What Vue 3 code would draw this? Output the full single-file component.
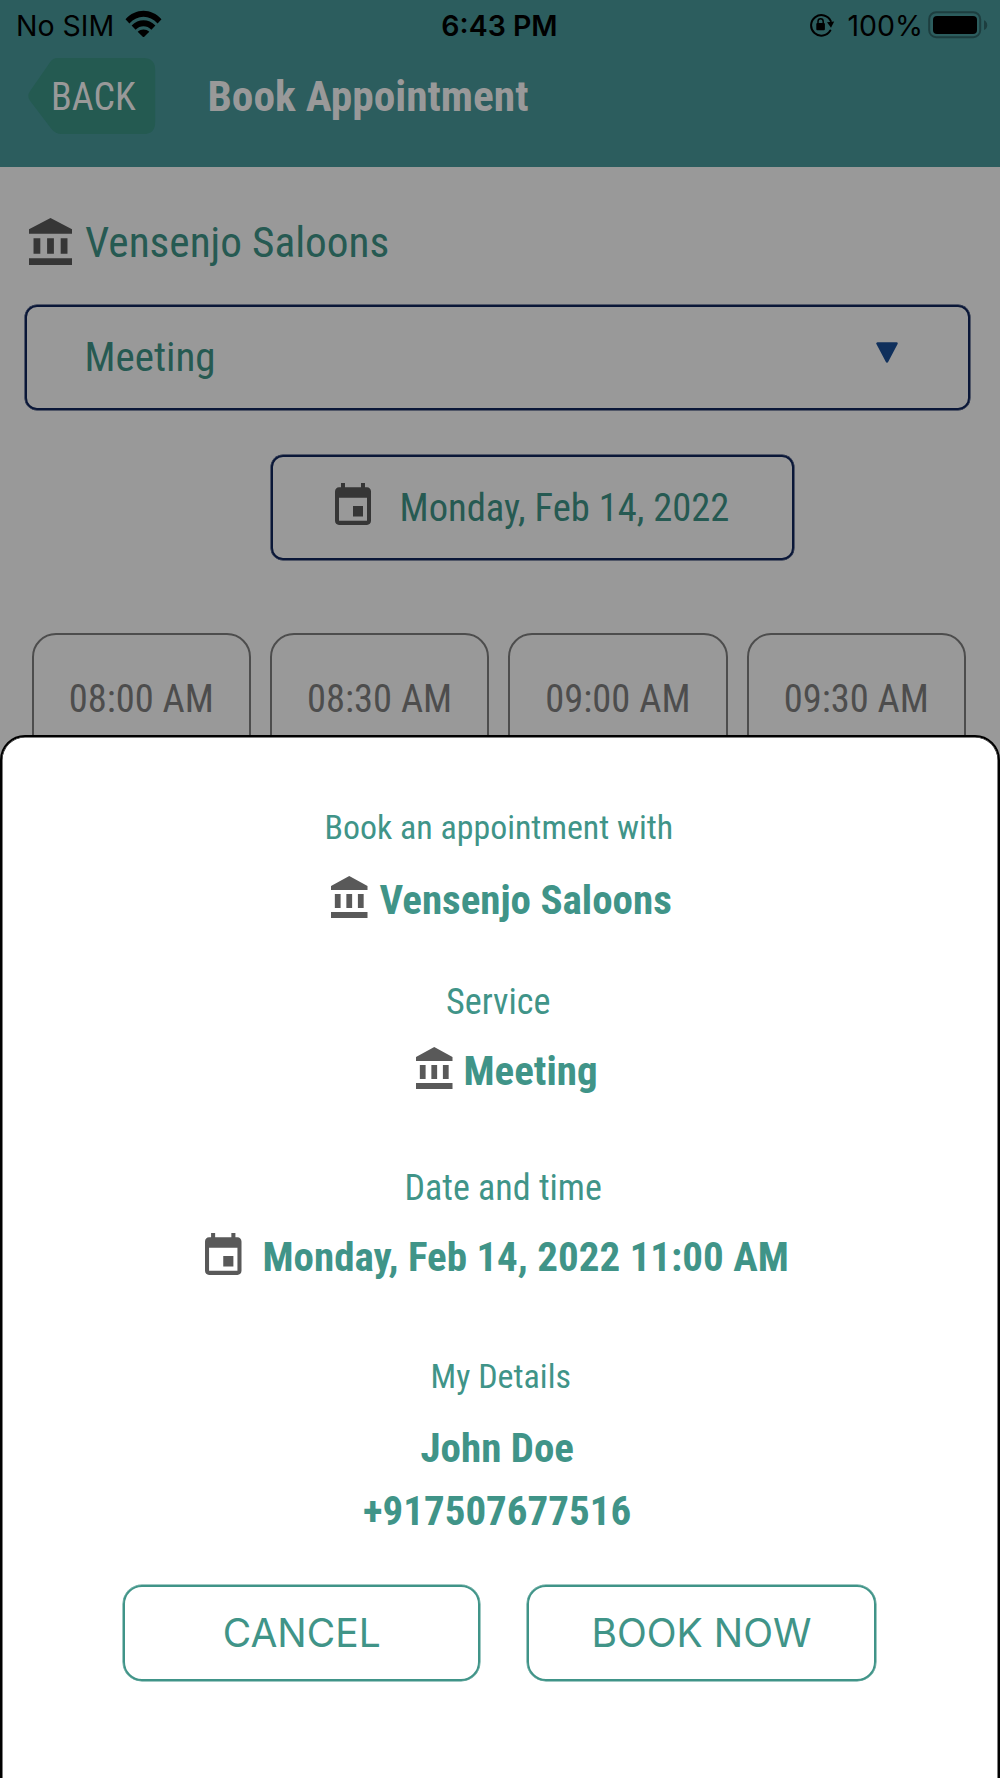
<template>
  <div class="screen">
    <header class="header">
      <div class="status-bar">
        <div class="status-left">
          <span class="carrier">No SIM</span>
          <svg class="wifi" viewBox="0 0 37 27">
            <path d="M0.5 9.3C10.5-2.2 26.5-2.2 36.5 9.3L32.6 13.4C24.6 4.6 12.4 4.6 4.4 13.4Z" />
            <path d="M6.6 15.6C13.4 8.4 23.6 8.4 30.4 15.6L26.4 19.7C21.8 15.2 15.2 15.2 10.6 19.7Z" />
            <path d="M12.7 21.8C16 18.7 21 18.7 24.3 21.8L18.5 27.5Z" />
          </svg>
        </div>
        <span class="clock">6:43 PM</span>
        <div class="status-right">
          <svg class="rotation" viewBox="0 0 26 24">
            <path d="M21.3 17.6A10.3 10.3 0 1 1 21.8 8.2" fill="none" stroke="#000" stroke-width="2" stroke-linecap="round" />
            <path d="M18 9.3L25.2 8.6L22 14.8Z" />
            <rect x="7.3" y="10" width="8.6" height="7.3" rx="1" />
            <path d="M9 10.5V8.4a2.6 2.6 0 0 1 5.2 0v2.1" fill="none" stroke="#000" stroke-width="1.5" />
          </svg>
          <span class="percent">100%</span>
          <svg class="battery" viewBox="0 0 60 28">
            <rect x="1.2" y="1.2" width="51" height="25" rx="7" fill="none" stroke="#1d3e3f" stroke-width="2" />
            <rect x="5" y="5" width="44" height="18" rx="4" />
            <path d="M56 9.3q3.2 1.4 3.2 4.9t-3.2 4.9z" fill="#1d3e3f" />
          </svg>
        </div>
      </div>
      <div class="nav">
        <button type="button" class="back">
          <svg class="back-shape" viewBox="0 0 129 77">
            <path d="M30 0H117Q129 0 129 12V65Q129 77 117 77H34Q28 77 24 72L2 43Q-1 38.5 2 34L22 5Q25 0 30 0Z" />
          </svg>
          <span class="back-text">BACK</span>
        </button>
        <h1 class="title">Book Appointment</h1>
      </div>
    </header>

    <main class="page">
      <div class="company">
        <svg class="bank" viewBox="2 1 19 21" preserveAspectRatio="none"><path :d="icons.bank" /></svg>
        <span>{{ booking.company }}</span>
      </div>
      <div class="select">
        <span>{{ booking.service }}</span>
        <svg class="caret" viewBox="0 0 22 21">
          <path d="M1.5 1.5H20.5L11 19.5Z" />
        </svg>
      </div>
      <div class="date-box">
        <svg class="calendar" viewBox="3 1 18 20" preserveAspectRatio="none"><path :d="icons.calendar" /></svg>
        <span>{{ booking.date }}</span>
      </div>
      <div class="slots">
        <div v-for="slot in slots" :key="slot" class="slot"><span>{{ slot }}</span></div>
      </div>
    </main>

    <section class="sheet">
      <p class="label label-with"><span>Book an appointment with</span></p>
      <div class="value value-company">
        <svg class="bank" viewBox="2 1 19 21" preserveAspectRatio="none"><path :d="icons.bank" /></svg>
        <span>{{ booking.company }}</span>
      </div>
      <p class="label label-service"><span>Service</span></p>
      <div class="value value-service">
        <svg class="bank" viewBox="2 1 19 21" preserveAspectRatio="none"><path :d="icons.bank" /></svg>
        <span>{{ booking.service }}</span>
      </div>
      <p class="label label-date"><span>Date and time</span></p>
      <div class="value value-date">
        <svg class="calendar" viewBox="3 1 18 20" preserveAspectRatio="none"><path :d="icons.calendar" /></svg>
        <span>{{ booking.date }} {{ booking.time }}</span>
      </div>
      <p class="label label-details"><span>My Details</span></p>
      <div class="value value-name"><span>{{ booking.name }}</span></div>
      <div class="value value-phone"><span>{{ booking.phone }}</span></div>
      <div class="actions">
        <button type="button" class="btn btn-cancel">CANCEL</button>
        <button type="button" class="btn btn-book">BOOK NOW</button>
      </div>
    </section>
  </div>
</template>

<script setup>
import { reactive } from "vue";

const booking = reactive({
  company: "Vensenjo Saloons",
  service: "Meeting",
  date: "Monday, Feb 14, 2022",
  time: "11:00 AM",
  name: "John Doe",
  phone: "+917507677516",
});

const slots = ["08:00 AM", "08:30 AM", "09:00 AM", "09:30 AM"];

const icons = {
  bank: "M4 10v7h3v-7H4zm6 0v7h3v-7h-3zM2 22h19v-3H2v3zm14-12v7h3v-7h-3zm-4.5-9L2 6v2h19V6l-9.5-5z",
  calendar:
    "M17 12h-5v5h5v-5zM16 1v2H8V1H6v2H5c-1.11 0-1.99.9-1.99 2L3 19c0 1.1.89 2 2 2h14c1.1 0 2-.9 2-2V5c0-1.1-.9-2-2-2h-1V1h-2zm3 18H5V8h14v11z",
};
</script>

<style>
body {
  margin: 0;
  background: #999;
}
</style>

<style scoped>
.screen {
  position: relative;
  width: 1000px;
  height: 1778px;
  overflow: hidden;
  background: #999;
  font-family: "Roboto Condensed", Roboto, sans-serif;
  font-stretch: 75%;
  white-space: nowrap;
}
.screen * {
  box-sizing: border-box;
}
.header {
  height: 167px;
  background: #2c5d5e;
}
.status-bar {
  display: grid;
  grid-template-columns: 1fr auto 1fr;
  align-items: center;
  height: 50px;
  padding: 0 13px 0 16px;
  font-family: Inter, "Liberation Sans", sans-serif;
  font-size: 28.5px;
  font-stretch: 100%;
  color: #000;
}
.status-left,
.status-right {
  display: flex;
  align-items: center;
}
.status-right {
  justify-content: flex-end;
}
.wifi {
  width: 37px;
  height: 27px;
  margin: 0 0 3px 11px;
}
.clock {
  margin: 0 4px 0 0;
  font-weight: 600;
}
.rotation {
  width: 26px;
  height: 24px;
  margin-right: 12px;
}
.battery {
  width: 60px;
  height: 28px;
  margin: 0 -1px 1px 5px;
}
.nav {
  display: flex;
  align-items: center;
  padding: 8px 0 0 27px;
}
.back {
  position: relative;
  width: 129px;
  height: 76px;
  padding: 0 0 0 24px;
  border: 0;
  background: none;
  font: inherit;
  font-size: 38px;
  text-align: left;
  color: #999;
}
.back-shape {
  position: absolute;
  left: 0;
  top: 0;
  width: 129px;
  height: 76px;
  fill: #245a51;
}
.back-text {
  position: relative;
  top: 1px;
}
.title {
  margin: 2px 0 0 51.5px;
  font-size: 43.4px;
  line-height: 50px;
  color: #999;
}
.page {
  color: #265a52;
}
.bank {
  width: 36.5px;
  height: 42px;
  fill: #595959;
}
.calendar {
  width: 36px;
  height: 42px;
  fill: #595959;
}
.page .bank,
.page .calendar {
  fill: #363636;
}
.company {
  display: flex;
  align-items: center;
  height: 50px;
  margin-top: 51px;
  padding-left: 29px;
  font-size: 43.3px;
}
.company .bank {
  width: 43px;
  height: 47px;
  margin: 0 13px 3px 0;
}
.company span {
  margin-bottom: 2px;
}
.select {
  display: flex;
  align-items: center;
  justify-content: space-between;
  width: 945.5px;
  height: 105.5px;
  margin: 36.5px 0 0 24.5px;
  padding: 0 70.5px 1px 58px;
  border: 2px solid #0a1738;
  border-radius: 12px;
  box-shadow: 0 0 0 0.5px #0a1738;
  font-size: 41px;
}
.caret {
  width: 22px;
  height: 21px;
  margin-bottom: 9px;
  fill: #10305c;
  stroke: #10305c;
  stroke-width: 2.5;
  stroke-linejoin: round;
}
.date-box {
  display: flex;
  align-items: center;
  width: 523px;
  height: 105.5px;
  margin: 44.5px 0 0 271px;
  padding-left: 62px;
  border: 2px solid #0a1738;
  border-radius: 12px;
  box-shadow: 0 0 0 0.5px #0a1738;
  font-size: 38.6px;
}
.date-box .calendar {
  margin: 0 28.5px 6px 0;
}
.slots {
  display: flex;
  gap: 19px;
  margin: 73px 0 0 31.7px;
}
.slot {
  width: 219.3px;
  height: 132px;
  padding-top: 41px;
  border: 2px solid #4d4d4d;
  border-radius: 24px;
  font-size: 38.5px;
  line-height: 45px;
  text-align: center;
  color: #4d4d4d;
}
/* bottom sheet covers the page below the first row of slots */
.sheet {
  position: absolute;
  left: 0;
  top: 734.5px;
  width: 1000px;
  height: 1060px;
  padding-top: 71px;
  border: 2px solid #000;
  border-radius: 25px 25px 0 0;
  box-shadow: inset 0 0 0 0.5px #000;
  background: #fff;
  color: #409488;
}
.label {
  margin: 0;
  font-size: 34px;
  line-height: 40px;
}
.value {
  display: flex;
  align-items: center;
  height: 48px;
  font-size: 41px;
  font-weight: 700;
  line-height: 48px;
}
.label-with {
  padding-left: 322.5px;
  font-size: 33.9px;
}
.value-company {
  margin-top: 28px;
  padding-left: 329px;
}
.value .bank {
  margin: 0 12px 6px 0;
}
.label-service {
  margin-top: 58.5px;
  padding-left: 444px;
  font-size: 36.2px;
}
.value-service {
  margin-top: 25px;
  padding-left: 414px;
}
.value-service .bank {
  margin-right: 11px;
}
.label-date {
  margin-top: 72.5px;
  padding-left: 402.5px;
  font-size: 36px;
}
.value-date {
  margin-top: 25px;
  padding-left: 203px;
}
.value .calendar {
  width: 36.5px;
  margin: 0 21px 6px 0;
}
.label-details {
  margin-top: 75px;
  padding-left: 428.5px;
}
.value-name {
  margin-top: 28px;
  padding-left: 418.5px;
}
.value-phone {
  margin-top: 15px;
  padding-left: 361px;
}
.actions {
  display: flex;
  gap: 46.5px;
  margin-top: 50px;
  padding-left: 121.2px;
}
.btn {
  height: 96px;
  padding: 0 0 1px;
  border: 2px solid #409488;
  border-radius: 19px;
  box-shadow: 0 0 0 0.5px #409488;
  background: none;
  font-family: Inter, "Liberation Sans", sans-serif;
  font-size: 39px;
  font-stretch: 100%;
  color: #409488;
}
.btn-cancel {
  width: 357px;
}
.btn-book {
  width: 349.5px;
}
</style>
